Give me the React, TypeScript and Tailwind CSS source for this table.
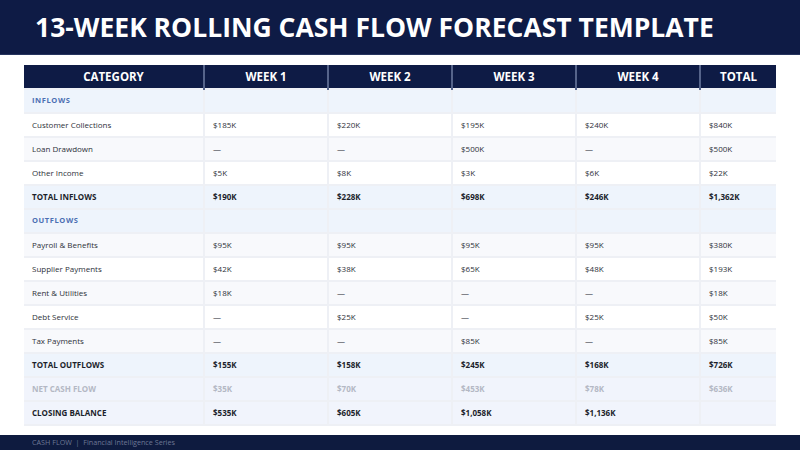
import React from "react";

type Row =
  | { kind: "section"; label: string }
  | { kind: "item"; label: string; vals: string[] }
  | { kind: "total"; label: string; vals: string[] }
  | { kind: "net"; label: string; vals: string[] }
  | { kind: "closing"; label: string; vals: string[] };

const HEADERS = ["CATEGORY", "WEEK 1", "WEEK 2", "WEEK 3", "WEEK 4", "TOTAL"];

const ROWS: Row[] = [
  { kind: "section", label: "INFLOWS" },
  { kind: "item", label: "Customer Collections", vals: ["$185K", "$220K", "$195K", "$240K", "$840K"] },
  { kind: "item", label: "Loan Drawdown", vals: ["—", "—", "$500K", "—", "$500K"] },
  { kind: "item", label: "Other Income", vals: ["$5K", "$8K", "$3K", "$6K", "$22K"] },
  { kind: "total", label: "TOTAL INFLOWS", vals: ["$190K", "$228K", "$698K", "$246K", "$1,362K"] },
  { kind: "section", label: "OUTFLOWS" },
  { kind: "item", label: "Payroll & Benefits", vals: ["$95K", "$95K", "$95K", "$95K", "$380K"] },
  { kind: "item", label: "Supplier Payments", vals: ["$42K", "$38K", "$65K", "$48K", "$193K"] },
  { kind: "item", label: "Rent & Utilities", vals: ["$18K", "—", "—", "—", "$18K"] },
  { kind: "item", label: "Debt Service", vals: ["—", "$25K", "—", "$25K", "$50K"] },
  { kind: "item", label: "Tax Payments", vals: ["—", "—", "$85K", "—", "$85K"] },
  { kind: "total", label: "TOTAL OUTFLOWS", vals: ["$155K", "$158K", "$245K", "$168K", "$726K"] },
  { kind: "net", label: "NET CASH FLOW", vals: ["$35K", "$70K", "$453K", "$78K", "$636K"] },
  { kind: "closing", label: "CLOSING BALANCE", vals: ["$535K", "$605K", "$1,058K", "$1,136K", ""] },
];

const COLS = ["w-[180px]", "w-[124px]", "w-[124px]", "w-[124px]", "w-[124px]", "w-[76px]"];

function rowBg(r: Row, i: number) {
  if (r.kind === "section") return "bg-[#eef4fc]";
  if (r.kind === "total") return "bg-[#eef4fc]";
  if (r.kind === "net" || r.kind === "closing") return "bg-[#f1f4fc]";
  return i % 2 === 0 ? "bg-[#f8f9fc]" : "bg-white";
}

function textCls(r: Row) {
  if (r.kind === "section") return "text-[#4b6fb3] font-bold tracking-[0.08em] text-[7.5px]";
  if (r.kind === "total" || r.kind === "closing") return "text-[#1c1f2b] font-bold text-[8px]";
  if (r.kind === "net") return "text-[#b4b8c4] font-bold text-[8px]";
  return "text-[#2e313a] text-[8px]";
}

export default function App() {
  return (
    <div className="w-[800px] h-[450px] bg-white flex flex-col overflow-hidden" style={{ fontFamily: "'Open Sans', sans-serif" }}>
      <div className="h-[55px] bg-[#0e1b45] flex items-center pl-[35px] shrink-0 border-b border-[#26345e]">
        <h1 className="text-white font-bold text-[26.5px] leading-none">
          13-WEEK ROLLING CASH FLOW FORECAST TEMPLATE
        </h1>
      </div>
      <div className="flex-1 pt-[10px] px-[24px]">
        <table className="border-collapse table-fixed w-[752px]">
          <thead>
            <tr className="h-[24px] bg-[#0e1b45]">
              {HEADERS.map((h, i) => (
                <th
                  key={h}
                  className={`${COLS[i]} text-white font-bold text-[11.5px] text-center border-x-2 border-[#56648a] first:border-l-0 last:border-r-0 p-0`}
                >
                  {h}
                </th>
              ))}
            </tr>
          </thead>
          <tbody>
            {ROWS.map((r, i) => (
              <tr key={i} className={`h-[24px] ${rowBg(r, i)}`}>
                <td className={`pl-[8px] border-2 border-[#eef0f5] border-l-0 ${textCls(r)}`}>{r.label}</td>
                {(r.kind === "section" ? ["", "", "", "", ""] : r.vals).map((v, j) => (
                  <td key={j} className={`pl-[8px] border-2 border-[#eef0f5] last:border-r-0 ${textCls(r)}`}>
                    {v}
                  </td>
                ))}
              </tr>
            ))}
          </tbody>
        </table>
      </div>
      <div className="h-[15px] bg-[#0e1b3f] flex items-center pl-[32px] shrink-0">
        <span className="text-[#6d7794] text-[7.2px]">CASH FLOW&nbsp;&nbsp;|&nbsp;&nbsp;Financial Intelligence Series</span>
      </div>
    </div>
  );
}
